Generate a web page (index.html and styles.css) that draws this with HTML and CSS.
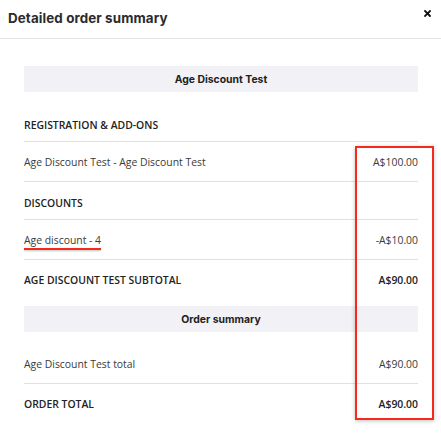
FILE: index.html
```html
<!DOCTYPE html>
<html>
<head>
<meta charset="utf-8">
<link rel="stylesheet" href="styles.css">
</head>
<body>
<div class="modal">
  <div class="modal-header">
    <h1 class="title">Detailed order summary</h1>
    <button class="close" aria-label="Close">
      <svg width="7" height="7" viewBox="0 0 7 7"><path d="M1 1L6 6M6 1L1 6" stroke="#111" stroke-width="1.8" stroke-linecap="square"/></svg>
    </button>
  </div>
  <div class="modal-body">
    <div class="bar">Age Discount Test</div>
    <div class="row heading bordered"><span>REGISTRATION &amp; ADD-ONS</span></div>
    <div class="row item bordered"><span>Age Discount Test - Age Discount Test</span><span class="amount">A$100.00</span></div>
    <div class="row heading bordered"><span>DISCOUNTS</span></div>
    <div class="row item bordered"><span class="marked">Age discount - 4</span><span class="amount">-A$10.00</span></div>
    <div class="row item strong"><span>AGE DISCOUNT TEST SUBTOTAL</span><span class="amount">A$90.00</span></div>
    <div class="bar second">Order summary</div>
    <div class="row item bordered"><span>Age Discount Test total</span><span class="amount">A$90.00</span></div>
    <div class="row item strong"><span>ORDER TOTAL</span><span class="amount">A$90.00</span></div>
  </div>
  <div class="highlight-box"></div>
</div>
</body>
</html>
```
FILE: styles.css
```css
* { box-sizing: border-box; }
html, body { margin: 0; padding: 0; background: #fff; }
body { font-family: "Open Sans", "Liberation Sans", sans-serif; color: #333; }
.modal { position: relative; width: 441px; height: 436px; background: #fff; }
.modal-header {
  height: 39px;
  border-bottom: 1px solid #e4e4e8;
  display: flex;
  align-items: flex-start;
  justify-content: space-between;
  padding: 0 8px 0 8px;
}
.title {
  margin: 0;
  padding-top: 9px;
  font-family: Inter, "Open Sans", sans-serif;
  font-weight: 700;
  font-size: 13.4px;
  line-height: 18px;
  color: #2b2b30;
  letter-spacing: 0.1px;
}
.close {
  border: 0; background: none; padding: 0; margin: 10px 2px 0 0;
  width: 7px; height: 7px; display: flex;
}
.modal-body { padding: 27px 23px 0 24px; display: flex; flex-direction: column; }
.bar {
  height: 26px;
  background: #f2f2f6;
  display: flex; align-items: center; justify-content: center;
  font-family: Inter, "Open Sans", sans-serif;
  font-weight: 700; font-size: 10.4px; color: #222;
  margin-bottom: 12px;
}
.bar.second { margin-top: 7px; }
.row {
  display: flex; justify-content: space-between; align-items: center;
  font-size: 10.4px; line-height: 12px; color: #3a3a3a;
}
.row.item { padding: 14px 0 13px; }
.row.heading { padding: 15px 0 10px; font-weight: 600; color: #222; }
.row.bordered { border-bottom: 1px solid #e0e0e6; }
.row.strong { font-weight: 600; color: #222; }
.amount { text-align: right; }
.marked { position: relative; }
.marked::after {
  content: ""; position: absolute; left: 0; right: 0; bottom: -4px;
  height: 2px; background: #f52a1b; box-shadow: 0 1px 2px rgba(0,0,0,0.25);
}
.highlight-box {
  position: absolute; left: 355px; top: 146px; width: 79px; height: 274px;
  border: 2px solid #f52a1b;
  box-shadow: 0 1px 4px rgba(0,0,0,0.25);
}
```
